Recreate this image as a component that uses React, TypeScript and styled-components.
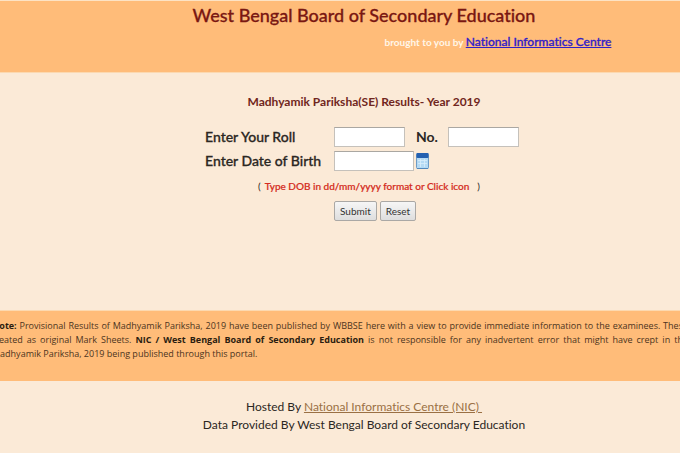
import React from "react";
import styled, { createGlobalStyle } from "styled-components";

const GlobalStyle = createGlobalStyle`
  *, *::before, *::after { box-sizing: border-box; }
  body {
    margin: 0;
    background: #fbead7;
    color: #2b2723;
    font-family: Lato, "Open Sans", sans-serif;
    font-variant-ligatures: none;
    overflow-x: hidden;
  }
`;

const Page = styled.div`
  display: flex;
  flex-direction: column;
  overflow-x: hidden;
`;

const Header = styled.header`
  border-top: 1px solid #fde3c4;
  border-bottom: 1px solid #fcd9b0;
  padding: 1px 0 20px 48px;
  background: #ffbc79;
  text-align: center;
`;

const Title = styled.h1`
  margin: 0;
  font-size: 18px;
  line-height: 26px;
  font-weight: 500;
  color: #7a1712;
  -webkit-text-stroke: 0.3px #7a1712;
`;

const Tagline = styled.p`
  margin: 0;
  padding: 4px 0 0 268px;
  font-size: 10px;
  line-height: 20px;
  font-weight: 700;
  color: #fff6e8;
  white-space: nowrap;
`;

const HeaderLink = styled.a`
  font-size: 12px;
  font-weight: 500;
  color: #3020c8;
  -webkit-text-stroke: 0.3px #3020c8;
`;

const Main = styled.main`
  padding: 20px 0 89px 48px;
`;

const Subtitle = styled.h2`
  margin: 0 0 16px;
  font-size: 12px;
  line-height: 18px;
  font-weight: 700;
  color: #702620;
  text-align: center;
`;

const Form = styled.form`
  display: grid;
  grid-template-columns: 129px auto;
  justify-content: center;
  row-gap: 4px;
  padding-right: 4px;
`;

const Label = styled.label<{ $inline?: boolean }>`
  width: ${(p) => (p.$inline ? "43px" : "auto")};
  padding-left: ${(p) => (p.$inline ? "11px" : "0")};
  font-size: 14px;
  line-height: 20px;
  font-weight: ${(p) => (p.$inline ? 700 : 500)};
  -webkit-text-stroke: ${(p) => (p.$inline ? "0" : "0.3px #2b2723")};
  white-space: nowrap;
`;

const Fields = styled.div`
  display: flex;
  align-items: center;
`;

const TextInput = styled.input<{ $wide?: boolean }>`
  width: ${(p) => (p.$wide ? "80px" : "71px")};
  height: 20px;
  padding: 1px 3px;
  border: 1px solid #c5c1bb;
  border-top-color: #aaa7a2;
  background: #fff;
  font: 12px Lato, sans-serif;
`;

const IconButton = styled.button`
  display: flex;
  margin-left: 2px;
  padding: 0;
  border: 0;
  background: none;
`;

const Hint = styled.p`
  grid-column: 1 / -1;
  display: flex;
  gap: 4px;
  margin: 3px 0 3px 53px;
  font-size: 10px;
  line-height: 16px;
  white-space: nowrap;
`;

const HintText = styled.span`
  padding-right: 4px;
  font-weight: 500;
  color: #d42a20;
  -webkit-text-stroke: 0.2px #d42a20;
`;

const Actions = styled.div`
  grid-column: 2;
  display: flex;
  gap: 3px;
`;

const Button = styled.button`
  height: 20px;
  padding: 0 5px;
  border: 1px solid #aaa8a5;
  border-radius: 2px;
  background: linear-gradient(#f6f6f6, #dedede);
  color: #333;
  font: 10px/16px Lato, sans-serif;
`;

const Notice = styled.section`
  padding: 8px 0 20px;
  border-top: 1px solid #fcd9b0;
  background: #ffbc79;
  overflow: hidden;
  font-family: "Open Sans", sans-serif;
  font-size: 9px;
  line-height: 14px;
  color: #4c3420;
`;

const NoticeText = styled.p`
  margin: 0 -8px;
`;

const Line = styled.span<{ $last?: boolean }>`
  display: block;
  white-space: nowrap;
  text-align: justify;
  text-align-last: ${(p) => (p.$last ? "left" : "justify")};
`;

const Strong = styled.b`
  color: #2b1c10;
`;

const Footer = styled.footer`
  padding: 17px 0 19px 48px;
  font-size: 12px;
  line-height: 18px;
  text-align: center;
`;

const FooterLink = styled.a`
  color: #9a7044;
  white-space: pre;
`;

const CalendarIcon = () => (
  <svg width="13" height="18" viewBox="0 0 13 18" aria-hidden="true">
    <rect x="0.5" y="1.5" width="12" height="15" rx="1" fill="#b5daf4" stroke="#6f9cc6" />
    <rect x="0.5" y="1" width="12" height="5" rx="1" fill="#2460b0" />
    <path d="M2 8.5h9M2 11.5h9M4.5 7v8M8.5 7v8" stroke="#d9eefb" strokeWidth="0.8" />
    <path d="M1 16.5h11" stroke="#5288bd" />
  </svg>
);

export default function App() {
  return (
    <>
      <GlobalStyle />
      <Page>
        <Header>
          <Title>West Bengal Board of Secondary Education</Title>
          <Tagline>
            brought to you by <HeaderLink href="#nic">National Informatics Centre</HeaderLink>
          </Tagline>
        </Header>
        <Main>
          <Subtitle>Madhyamik Pariksha(SE) Results- Year 2019</Subtitle>
          <Form onSubmit={(e) => e.preventDefault()}>
            <Label htmlFor="roll">Enter Your Roll</Label>
            <Fields>
              <TextInput id="roll" type="text" />
              <Label htmlFor="number" $inline>No.</Label>
              <TextInput id="number" type="text" />
            </Fields>
            <Label htmlFor="dob">Enter Date of Birth</Label>
            <Fields>
              <TextInput id="dob" type="text" $wide />
              <IconButton type="button" aria-label="Choose date">
                <CalendarIcon />
              </IconButton>
            </Fields>
            <Hint>
              <span>(</span>
              <HintText>Type DOB in dd/mm/yyyy format or Click icon</HintText>
              <span>)</span>
            </Hint>
            <Actions>
              <Button type="submit">Submit</Button>
              <Button type="reset">Reset</Button>
            </Actions>
          </Form>
        </Main>
        <Notice>
          <NoticeText>
            <Line>
              <Strong>Note:</Strong> Provisional Results of Madhyamik Pariksha, 2019 have been published by WBBSE here with a view to provide immediate information to the examinees. These
            </Line>
            <Line>
              treated as original Mark Sheets. <Strong>NIC / West Bengal Board of Secondary Education</Strong> is not responsible for any inadvertent error that might have crept in the
            </Line>
            <Line $last>Madhyamik Pariksha, 2019 being published through this portal.</Line>
          </NoticeText>
        </Notice>
        <Footer>
          <div>
            Hosted By <FooterLink href="#host">{"National Informatics Centre (NIC) "}</FooterLink>
          </div>
          <div>Data Provided By West Bengal Board of Secondary Education</div>
        </Footer>
      </Page>
    </>
  );
}
